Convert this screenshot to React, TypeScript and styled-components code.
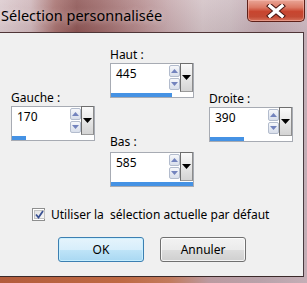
import React from "react";
import styled, { createGlobalStyle } from "styled-components";

const Global = createGlobalStyle`
  html, body { margin: 0; padding: 0; background: #fff; }
  body { font-family: "Noto Sans", "Open Sans", sans-serif; }
  * { box-sizing: border-box; }
`;

const Window = styled.div`
  width: 307px;
  height: 283px;
  overflow: hidden;
  display: flex;
  flex-direction: column;
  background: linear-gradient(
    90deg,
    #b35c3c 0%,
    #bf6a44 40%,
    #c27a5c 55%,
    #bb9aa0 68%,
    #b9a2aa 85%,
    #c4aeb6 100%
  );
`;

const TitleBar = styled.div`
  height: 32px;
  flex: none;
  display: flex;
  align-items: flex-start;
  justify-content: space-between;
  padding-right: 2px;
  background:
    linear-gradient(180deg, rgba(255, 255, 255, 0.12) 0%, rgba(0, 0, 0, 0.04) 100%),
    linear-gradient(
      90deg,
      #dccbcf 0%,
      #cfb6ba 10%,
      #a77270 18%,
      #8e5655 25%,
      #9c6868 33%,
      #b48a8c 45%,
      #c6a9ad 55%,
      #d3c2c6 66%,
      #cdbcc1 75%,
      #c1a8b0 85%,
      #cdb8c0 100%
    );
`;

const Title = styled.div`
  font-size: 14.5px;
  line-height: 20px;
  padding: 5px 0 0 1px;
  color: #000;
  text-shadow: 0 0 6px rgba(255, 240, 240, 0.7);
  white-space: nowrap;
`;

const CloseButton = styled.div`
  width: 58px;
  height: 22px;
  border: 1px solid #5e2019;
  border-top: none;
  border-radius: 0 0 5px 5px;
  background: linear-gradient(180deg, #e9a697 0%, #dc7a66 35%, #c8452f 55%, #c34a34 80%, #d7735c 100%);
  box-shadow: inset 0 0 0 1px rgba(255, 200, 190, 0.45);
  display: flex;
  align-items: center;
  justify-content: center;
`;

const Client = styled.div`
  flex: 1;
  margin: 0 3px 6px 0;
  background: #f0f0f0;
  border-top: 1px solid #4f3537;
  border-right: 1px solid #4a3a40;
  border-bottom: 1px solid #3b2a2a;
  display: flex;
  flex-direction: column;
`;

const Controls = styled.div`
  display: flex;
  align-items: flex-start;
  padding: 14px 0 0 11px;
  gap: 15px;
`;

const Column = styled.div<{ $offset: number }>`
  display: flex;
  flex-direction: column;
  margin-top: ${(p) => p.$offset}px;
`;

const Field = styled.div<{ $below?: number }>`
  display: flex;
  flex-direction: column;
  margin-top: ${(p) => p.$below ?? 0}px;
`;

const Label = styled.span<{ $gap: number }>`
  font-size: 12px;
  line-height: 15px;
  color: #000;
  margin-bottom: ${(p) => p.$gap}px;
`;

const Box = styled.div`
  width: 84px;
  height: 35px;
  border: 1px solid #a7abb3;
  background: #fff;
  display: grid;
  grid-template-columns: 58px 11px 13px;
  grid-template-rows: 28px 5px;
`;

const Value = styled.div`
  grid-column: 1;
  grid-row: 1;
  font-size: 12px;
  line-height: 15px;
  padding: 2px 0 0 5px;
  color: #000;
`;

const Arrows = styled.div`
  grid-column: 2;
  grid-row: 1;
  display: flex;
  flex-direction: column;
  gap: 1px;
  padding-top: 1px;
`;

const ArrowBtn = styled.div`
  width: 11px;
  height: 12px;
  border: 1px solid #b3bccd;
  border-radius: 2px;
  background: linear-gradient(180deg, #f7f8fb 0%, #e6eaf2 50%, #d9dfeb 100%);
  display: flex;
  align-items: center;
  justify-content: center;
`;

const DropBtn = styled.div`
  grid-column: 3;
  grid-row: 1;
  margin-top: -1px;
  border: 1px solid #6e6e6e;
  border-right-color: #8c8c8c;
  border-bottom-color: #9a9a9a;
  background: linear-gradient(180deg, #fafafa 0%, #e9e9e9 45%, #d4d4d4 100%);
  display: flex;
  justify-content: center;
  padding-top: 11px;
`;

const Track = styled.div`
  grid-column: 1 / -1;
  grid-row: 2;
  padding-top: 1px;
`;

const Fill = styled.div`
  height: 4px;
  background: #4592e4;
`;

const CheckRow = styled.label`
  display: flex;
  align-items: center;
  gap: 6px;
  padding-left: 32px;
  margin-top: 20px;
  font-size: 12px;
  line-height: 15px;
  color: #000;
  white-space: pre;
`;

const CheckBox = styled.span`
  width: 13px;
  height: 13px;
  border: 1px solid #8e8f8f;
  background: #fff;
  padding: 1px;
  display: flex;
`;

const CheckInner = styled.span`
  flex: 1;
  background: linear-gradient(135deg, #e4e4e4 0%, #f6f6f6 100%);
  border: 1px solid #c3c3c3;
  display: flex;
  align-items: center;
  justify-content: center;
`;

const ButtonRow = styled.div`
  display: flex;
  gap: 16px;
  padding-left: 58px;
  margin-top: 15px;
`;

const Button = styled.div<{ $primary?: boolean }>`
  width: 86px;
  height: 25px;
  border-radius: 3px;
  border: 1px solid ${(p) => (p.$primary ? "#3c7fb1" : "#707070")};
  background: ${(p) =>
    p.$primary
      ? "linear-gradient(180deg, #e5f4fc 0%, #d7eefb 50%, #bfe4f8 51%, #a9d8f2 100%)"
      : "linear-gradient(180deg, #f2f2f2 0%, #ebebeb 50%, #dddddd 51%, #cfcfcf 100%)"};
  box-shadow: inset 0 0 0 1px ${(p) => (p.$primary ? "rgba(200,240,255,0.9)" : "rgba(255,255,255,0.75)")};
  font-size: 12px;
  line-height: 15px;
  color: #000;
  display: flex;
  align-items: center;
  justify-content: center;
`;

const Tri = ({ up, color, w = 7, h = 4 }: { up?: boolean; color: string; w?: number; h?: number }) => (
  <svg width={w} height={h} viewBox={`0 0 ${w} ${h}`}>
    <path d={up ? `M0 ${h} L${w / 2} 0 L${w} ${h} Z` : `M0 0 L${w} 0 L${w / 2} ${h} Z`} fill={color} />
  </svg>
);

type SpinProps = { label: string; value: string; fill: number; gap: number; below?: number };

const SpinField = ({ label, value, fill, gap, below }: SpinProps) => (
  <Field $below={below}>
    <Label $gap={gap}>{label}</Label>
    <Box>
      <Value>{value}</Value>
      <Arrows>
        <ArrowBtn>
          <Tri up color="#7383bd" />
        </ArrowBtn>
        <ArrowBtn>
          <Tri color="#7383bd" />
        </ArrowBtn>
      </Arrows>
      <DropBtn>
        <Tri color="#000" w={9} h={5} />
      </DropBtn>
      <Track>
        <Fill style={{ width: `${fill}%` }} />
      </Track>
    </Box>
  </Field>
);

export default function App() {
  return (
    <>
      <Global />
      <Window>
        <TitleBar>
          <Title>Sélection personnalisée</Title>
          <CloseButton>
            <svg width="20" height="14" viewBox="0 0 20 14">
              <path
                d="M4 2 L16 12 M16 2 L4 12"
                stroke="#4a1712"
                strokeWidth="5.5"
                strokeLinecap="square"
              />
              <path
                d="M4 2 L16 12 M16 2 L4 12"
                stroke="#ffffff"
                strokeWidth="3.5"
                strokeLinecap="square"
              />
            </svg>
          </CloseButton>
        </TitleBar>
        <Client>
          <Controls>
            <Column $offset={43}>
              <SpinField label="Gauche :" value="170" fill={17} gap={1} />
            </Column>
            <Column $offset={0}>
              <SpinField label="Haut :" value="445" fill={74} gap={1} />
              <SpinField label="Bas :" value="585" fill={100} gap={3} below={36} />
            </Column>
            <Column $offset={44}>
              <SpinField label="Droite :" value="390" fill={41} gap={1} />
            </Column>
          </Controls>
          <CheckRow>
            <CheckBox>
              <CheckInner>
                <svg width="9" height="9" viewBox="0 0 9 9">
                  <path
                    d="M1 4.5 L3.5 7.5 L8 1"
                    fill="none"
                    stroke="#3a5192"
                    strokeWidth="1.8"
                  />
                </svg>
              </CheckInner>
            </CheckBox>
            {"Utiliser la  sélection actuelle par défaut"}
          </CheckRow>
          <ButtonRow>
            <Button $primary>OK</Button>
            <Button>Annuler</Button>
          </ButtonRow>
        </Client>
      </Window>
    </>
  );
}
